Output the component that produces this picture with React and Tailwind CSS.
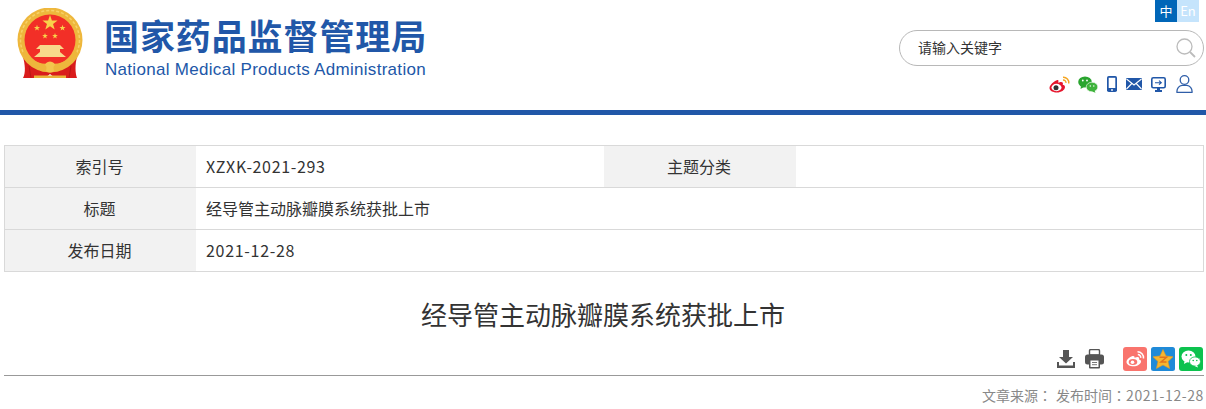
const CJK = "font-['Noto_Sans_CJK_SC','Noto_Sans',sans-serif]";

const Star = ({ cx, cy, r, rot = 0 }) => {
  const pts = [];
  for (let i = 0; i < 10; i++) {
    const rad = i % 2 === 0 ? r : r * 0.4;
    const a = ((-90 + rot + i * 36) * Math.PI) / 180;
    pts.push(`${(cx + rad * Math.cos(a)).toFixed(2)},${(cy + rad * Math.sin(a)).toFixed(2)}`);
  }
  return <polygon points={pts.join(" ")} fill="#f8d24a" />;
};

const Emblem = () => (
  <svg width="68" height="71" viewBox="0 0 68 71" className="block">
    <path d="M6 49 C8 56 9 65 6 70 L28 70 L33 66 L38 70 L60 70 C58 65 58 56 60 49 L33 58 Z" fill="#d91c1c" />
    <path d="M12 58 L14 70 M54 58 L52 70" stroke="#a81212" strokeWidth="1" opacity="0.6" />
    <circle cx="33" cy="32" r="32.500" fill="#eeb73c" />
    <circle cx="33" cy="32" r="29.500" fill="none" stroke="#f7d267" strokeWidth="1.500" strokeDasharray="3 2" />
    <circle cx="33" cy="32" r="25.500" fill="#f22f27" />
    <Star cx={33} cy={15} r={8} />
    <Star cx={20} cy={20} r={3.200} />
    <Star cx={28} cy={28} r={3} />
    <Star cx={38} cy={28} r={3} />
    <Star cx={45.500} cy={20} r={3.200} />
    <path d="M23 37 L43 37 L47 41 L43 41 L43 44 L49 49 L17 49 L23 44 L23 41 L19 41 Z" fill="#f8d98a" />
    <path d="M5 46 C11 57 21 62 33 62 C45 62 55 57 61 46 L59 43 C53 53 44 56 33 56 C22 56 13 53 7 43 Z" fill="#eeb73c" />
    <circle cx="33" cy="59" r="5.500" fill="#f3c64d" />
    <circle cx="26" cy="60" r="3.500" fill="#eeb73c" />
    <circle cx="40" cy="60" r="3.500" fill="#eeb73c" />
    <path d="M17 67.500 L49 67.500 L49 70 L17 70 Z" fill="#e9b23a" />
  </svg>
);

const SearchIcon = () => (
  <svg width="20" height="20" viewBox="0 0 20 20" fill="none" stroke="#bcbcbc" strokeWidth="1.300">
    <circle cx="8.500" cy="8.500" r="7.500" />
    <path d="M14 14 L19 19" strokeWidth="1.800" />
  </svg>
);

const WeiboHead = () => (
  <svg width="21" height="17" viewBox="0 0 21 17">
    <path d="M8.500 4 C5 5 0.500 9 0.500 12 C0.500 15 4.500 16.500 8 16.500 C12 16.500 16 14 16 11 C16 9.500 14.500 9 13.700 8.800 C14.300 7.300 14 5.900 11.500 6.100 L9.200 6.800 C9.500 5 9.800 3.800 8.500 4 Z" fill="#e6162d" />
    <ellipse cx="7.500" cy="11.500" rx="5" ry="3.700" fill="#fff" />
    <circle cx="7" cy="11.700" r="2.500" fill="#333" />
    <path d="M14 1.200 A5.500 5.500 0 0 1 19.800 7.500" fill="none" stroke="#f5a623" strokeWidth="1.500" />
    <path d="M14 4 A2.800 2.800 0 0 1 17 7" fill="none" stroke="#f5a623" strokeWidth="1.300" />
  </svg>
);

const WechatHead = () => (
  <svg width="20" height="17" viewBox="0 0 20 17">
    <ellipse cx="7" cy="6" rx="6.800" ry="5.600" fill="#2aa52f" />
    <path d="M3 10 L2.500 13 L6 11 Z" fill="#2aa52f" />
    <ellipse cx="14" cy="11" rx="5.800" ry="4.800" fill="#3fb33c" stroke="#fff" strokeWidth="0.600" />
    <path d="M16.500 14.500 L17.500 16.800 L14 15.500 Z" fill="#3fb33c" />
    <circle cx="4.800" cy="4.500" r="0.900" fill="#fff" />
    <circle cx="9" cy="4.500" r="0.900" fill="#fff" />
    <circle cx="12.300" cy="10" r="0.700" fill="#fff" />
    <circle cx="15.800" cy="10" r="0.700" fill="#fff" />
  </svg>
);

const PhoneIcon = () => (
  <svg width="10" height="16" viewBox="0 0 10 16">
    <rect x="0" y="0" width="10" height="16" rx="1.800" fill="#2157a8" />
    <rect x="1.700" y="1.800" width="6.600" height="10.200" fill="#fff" />
    <circle cx="5" cy="14" r="0.900" fill="#fff" />
  </svg>
);

const MailIcon = () => (
  <svg width="16" height="12" viewBox="0 0 16 12">
    <rect width="16" height="12" rx="1" fill="#2157a8" />
    <path d="M0.500 1 L8 7 L15.500 1 M0.500 11 L5.800 5.500 M15.500 11 L10.200 5.500" fill="none" stroke="#fff" strokeWidth="1.100" />
  </svg>
);

const ScreenIcon = () => (
  <svg width="15" height="15" viewBox="0 0 15 15">
    <rect x="0.800" y="0.800" width="13.400" height="9.900" rx="1.500" fill="#fff" stroke="#2157a8" strokeWidth="1.600" />
    <path d="M4 5.700 L10 5.700 M8 3.700 L10.300 5.700 L8 7.700" fill="none" stroke="#2157a8" strokeWidth="1.100" />
    <path d="M6 11 L9 11 L9 13 L11 13 L11 15 L4 15 L4 13 L6 13 Z" fill="#2157a8" />
  </svg>
);

const UserIcon = () => (
  <svg width="17" height="18" viewBox="0 0 17 18" fill="none" stroke="#2f5ea8" strokeWidth="1.300">
    <circle cx="8.500" cy="5" r="4.300" />
    <path d="M1 17.300 L16 17.300 C16.500 13 13.500 10.600 11 10.300 L6 10.300 C3.500 10.600 0.500 13 1 17.300 Z" />
  </svg>
);

const DownloadIcon = () => (
  <svg width="18" height="18" viewBox="0 0 18 18" fill="#555">
    <path d="M6 0 L12 0 L12 7 L16 7 L9 13.500 L2 7 L6 7 Z" />
    <path d="M0 12 L2 12 L2 15.500 L16 15.500 L16 12 L18 12 L18 18 L0 18 Z" />
  </svg>
);

const PrintIcon = () => (
  <svg width="19" height="20" viewBox="0 0 19 20">
    <path d="M4.500 6 L4.500 1.800 Q4.500 0.500 5.800 0.500 L13.200 0.500 Q14.500 0.500 14.500 1.800 L14.500 6 Z" fill="#fff" stroke="#555" strokeWidth="1.400" />
    <rect x="0" y="5.500" width="19" height="10" rx="2.500" fill="#555" />
    <rect x="4" y="10.500" width="11" height="9" rx="1" fill="#555" />
    <rect x="5.500" y="11.500" width="8" height="6.500" fill="#fff" />
    <path d="M7 13.500 L12 13.500 M7 15.700 L12 15.700" stroke="#777" strokeWidth="1" />
  </svg>
);

const ShareWeibo = () => (
  <svg width="24" height="24" viewBox="0 0 24 24">
    <rect width="24" height="24" rx="3" fill="#f9746d" />
    <path d="M9.500 9 C6.500 10 3.500 12.500 3.500 15 C3.500 17.800 7 19.300 10.500 19.300 C14.500 19.300 18 17 18 14.500 C18 13.200 16.800 12.800 16 12.600 C16.600 11 16 9.800 13.500 10.200 L11.500 10.800 C11.800 9.300 11 8.600 9.500 9 Z" fill="#fff" />
    <ellipse cx="10" cy="15" rx="4.300" ry="3" fill="#f9746d" />
    <circle cx="9.500" cy="15.200" r="1.800" fill="#fff" />
    <path d="M14.500 4.800 A6 6 0 0 1 20.500 11.500 M14.800 7.500 A3 3 0 0 1 17.700 10.800" fill="none" stroke="#fff" strokeWidth="1.500" />
  </svg>
);

const ShareQzone = () => (
  <svg width="24" height="24" viewBox="0 0 24 24">
    <rect width="24" height="24" rx="2.500" fill="#1f8ad8" />
    <path d="M12 2.500 L15 9 L22 9.800 L17 14.500 L18.600 21.500 L12 18 L5.400 21.500 L7 14.500 L2 9.800 L9 9 Z" fill="#f6b62f" stroke="#e79a1c" strokeWidth="0.600" />
    <path d="M8.500 10.300 L15.500 10.300 L10 15 L15.500 15" fill="none" stroke="#e2731c" strokeWidth="1.500" />
  </svg>
);

const ShareWechat = () => (
  <svg width="24" height="24" viewBox="0 0 24 24">
    <rect width="24" height="24" rx="3" fill="#0cc24e" />
    <ellipse cx="9.500" cy="9.500" rx="7" ry="6" fill="#fff" />
    <path d="M5.500 14 L5 17 L8.500 15 Z" fill="#fff" />
    <ellipse cx="16" cy="14.500" rx="5.500" ry="4.600" fill="#fff" stroke="#0cc24e" strokeWidth="0.800" />
    <path d="M18 18 L19 20.500 L15.500 19 Z" fill="#fff" />
    <circle cx="7.300" cy="8" r="1" fill="#0cc24e" />
    <circle cx="11.800" cy="8" r="1" fill="#0cc24e" />
    <circle cx="14.200" cy="13.500" r="0.800" fill="#0cc24e" />
    <circle cx="17.800" cy="13.500" r="0.800" fill="#0cc24e" />
  </svg>
);

const Label = ({ children, className = "w-[191px]" }) => (
  <div className={`flex items-center justify-center bg-[#f2f2f2] shrink-0 pr-[2px] ${className}`}>{children}</div>
);

const Header = () => (
  <header className="h-[110px] flex justify-between">
    <div className="flex items-start pl-[17px] pt-[8px]">
      <Emblem />
      <div className="ml-[19px] pt-[4px]">
        <div className={`${CJK} text-[35px] leading-[46px] font-bold tracking-[0.9px] text-[#2157a8] whitespace-nowrap`}>
          国家药品监督管理局
        </div>
        <div className="ml-[1px] font-['Liberation_Sans',sans-serif] text-[17px] leading-[20px] mt-[2px] tracking-[0.3px] text-[#2157a8] whitespace-nowrap">
          National Medical Products Administration
        </div>
      </div>
    </div>
    <div className="w-[307px] flex flex-col items-end pr-[2px]">
      <div className={`${CJK} flex mr-[5px] text-[13px] leading-[22px] text-white`}>
        <span className="w-[22px] h-[22px] text-center bg-[#0066b8]">中</span>
        <span className="w-[22px] h-[22px] text-center bg-[#c5e4fc]">En</span>
      </div>
      <div className="mt-[8px] w-[305px] h-[36px] border border-[#b8b8b8] rounded-[18px] flex items-center justify-between pl-[18px] pr-[7px]">
        <span className={`${CJK} pb-[2px] text-[14px] text-[#333]`}>请输入关键字</span>
        <SearchIcon />
      </div>
      <div className="mt-[8px] h-[20px] w-full flex items-center justify-end pr-[11px]">
        <WeiboHead />
        <span className="ml-[8px]"><WechatHead /></span>
        <span className="ml-[9px]"><PhoneIcon /></span>
        <span className="ml-[9px]"><MailIcon /></span>
        <span className="ml-[9px]"><ScreenIcon /></span>
        <span className="ml-[10px]"><UserIcon /></span>
      </div>
    </div>
  </header>
);

const InfoTable = () => (
  <div className={`${CJK} ml-[4px] mr-[2px] mt-[30px] border border-[#d9d9d9] border-b-0 text-[16px] leading-[41px] text-[#333]`}>
    <div className="flex h-[42px] border-b border-[#d9d9d9]">
      <Label>索引号</Label>
      <div className="flex-1 pl-[10px] tracking-[0.65px]">XZXK-2021-293</div>
      <Label className="w-[192px]">主题分类</Label>
      <div className="w-[407px] pl-[10px]" />
    </div>
    <div className="flex h-[42px] border-b border-[#d9d9d9]">
      <Label>标题</Label>
      <div className="flex-1 pl-[10px]">经导管主动脉瓣膜系统获批上市</div>
    </div>
    <div className="flex h-[42px] border-b border-[#d9d9d9]">
      <Label>发布日期</Label>
      <div className="flex-1 pl-[10px] tracking-[0.7px]">2021-12-28</div>
    </div>
  </div>
);

export default function App() {
  return (
    <div className="w-[1206px] h-[409px] overflow-hidden bg-white">
      <Header />
      <div className="h-[5px] bg-[#2157a8]" />
      <InfoTable />
      <h1 className={`${CJK} mt-[22px] text-center text-[26px] leading-[40px] font-normal text-[#333]`}>
        经导管主动脉瓣膜系统获批上市
      </h1>
      <div className="ml-[4px] mr-[2px] mt-[11px] h-[31px] pt-[2px] pr-[1px] border-b border-[#999] flex items-start justify-end">
        <span className="mt-[3px]"><DownloadIcon /></span>
        <span className="ml-[10px] mt-[2px]"><PrintIcon /></span>
        <span className="ml-[19px]"><ShareWeibo /></span>
        <span className="ml-[4px]"><ShareQzone /></span>
        <span className="ml-[4px]"><ShareWechat /></span>
      </div>
      <div className={`${CJK} ml-[4px] mr-[2px] mt-[7px] text-right text-[14px] leading-[24px] text-[#888]`}>
        文章来源<span className="font-['Noto_Sans_CJK_TC',sans-serif] mr-[1px]">：</span> 发布时间<span className="font-['Noto_Sans_CJK_TC',sans-serif]">：</span><span className="tracking-[0.6px]">2021-12-28</span>
      </div>
    </div>
  );
}
